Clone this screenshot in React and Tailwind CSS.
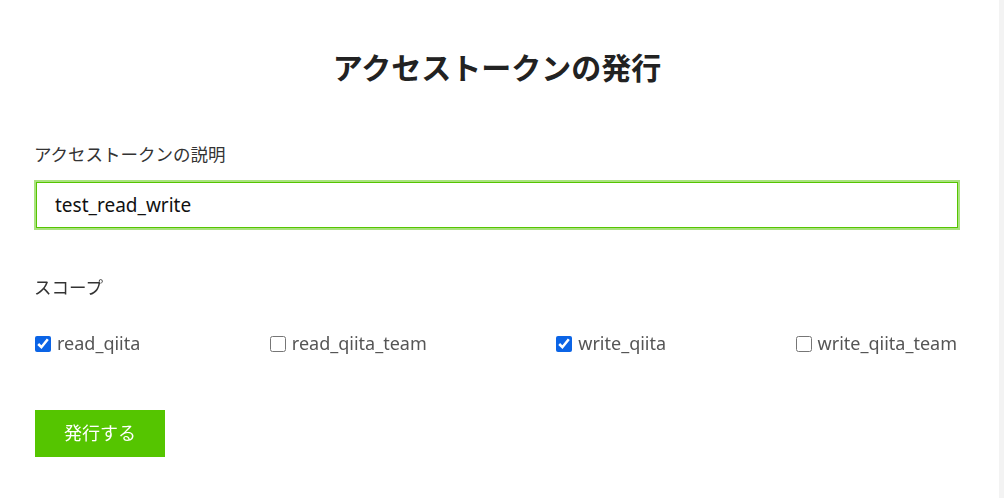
import React from "react";

const font = { fontFamily: '"Noto Sans", "Noto Sans CJK JP", sans-serif' };

function Check({ label, checked }) {
  return (
    <label className="flex items-center gap-[6px] text-[18px] leading-[27px] text-[#555555]">
      <input
        type="checkbox"
        defaultChecked={checked}
        className="w-4 h-4 m-0 accent-[#0b64e6]"
      />
      <span>{label}</span>
    </label>
  );
}

export default function App() {
  return (
    <div
      className="flex w-[1004px] h-[498px] bg-white overflow-hidden"
      style={font}
    >
      <div className="flex-1 pl-[34px] pr-[39px]">
        <h1 className="pt-[45px] text-center text-[30px] leading-[45px] font-bold text-[#222222]">
          アクセストークンの発行
        </h1>
        <div className="mt-[51px] text-[17.5px] leading-[26px] text-[#333333]">
          アクセストークンの説明
        </div>
        <div className="mt-[15px] px-[2px]">
          <input
            type="text"
            defaultValue="test_read_write"
            autoFocus
            className="block w-full h-[46px] px-[18px] text-[19px] text-[#111111] bg-white border border-[#55c500] ring-2 ring-[#55c500]/50 outline-none caret-black"
          />
        </div>
        <div className="mt-[46px] text-[17.5px] leading-[26px] text-[#333333]">
          スコープ
        </div>
        <div className="mt-[30px] flex justify-between pl-px pr-[3px]">
          <Check label="read_qiita" checked />
          <Check label="read_qiita_team" />
          <Check label="write_qiita" checked />
          <Check label="write_qiita_team" />
        </div>
        <button className="mt-[53px] ml-px w-[130px] h-[47px] bg-[#55c500] text-white text-[18px]">
          発行する
        </button>
      </div>
      <div className="w-[5px] bg-[#f3f3f3]" />
    </div>
  );
}
